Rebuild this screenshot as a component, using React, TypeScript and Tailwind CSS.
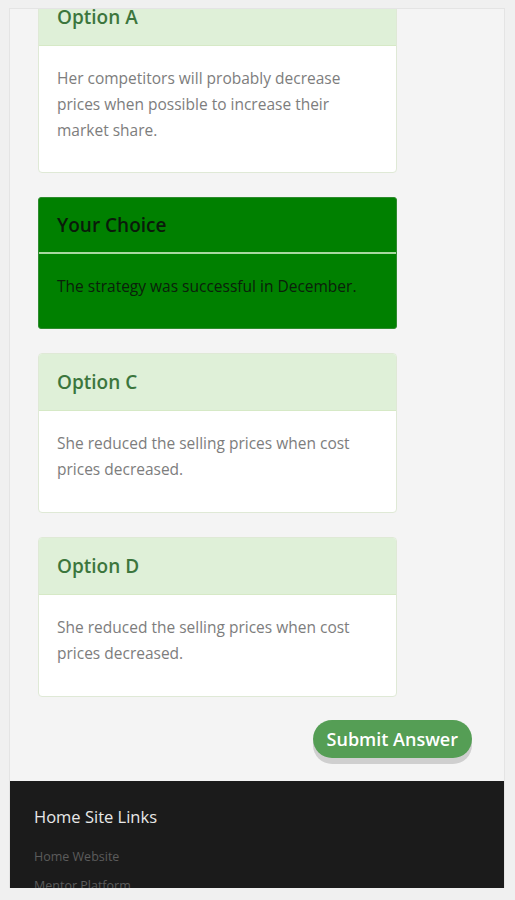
import React from 'react';

interface OptionCardProps {
  title: string;
  text: string;
  chosen?: boolean;
  first?: boolean;
}

const OptionCard: React.FC<OptionCardProps> = ({title, text, chosen = false, first = false}) => {
  if (chosen) {
    return (
      <div className="w-[359px] rounded-[3px] border border-[#2e8b2e] bg-[#008000]">
        <div className="flex h-[56px] items-center border-b-2 border-[#a8d8a0] px-[18px]">
          <h3 className="text-[19px] font-semibold text-[#0a1a0a]">{title}</h3>
        </div>
        <div className="px-[18px] pb-[29px] pt-[19px]">
          <p className="text-[15.5px] leading-[26px] text-[#0b200b]">{text}</p>
        </div>
      </div>
    );
  }
  return (
    <div
      className={
        first
          ? 'mt-[-21px] w-[359px] overflow-hidden rounded-[4px] border border-[#dfe9d6] bg-white'
          : 'w-[359px] overflow-hidden rounded-[4px] border border-[#dfe9d6] bg-white'
      }
    >
      <div className="flex h-[57px] items-center border-b border-[#d6e9c6] bg-[#dff0d8] px-[18px]">
        <h3 className="text-[19px] font-semibold text-[#3c763d]">{title}</h3>
      </div>
      <div className={first ? 'px-[18px] pb-[29px] pt-[19px]' : 'px-[18px] pb-[30px] pt-[19px]'}>
        <p className="text-[15.5px] leading-[26px] text-[#7d7d7d]">{text}</p>
      </div>
    </div>
  );
};

export default function App() {
  return (
    <div
      className="h-[900px] w-[515px] overflow-hidden bg-[#f0f0f0] pl-[9px] pt-[8px]"
      style={{fontFamily: '"Open Sans", "Noto Sans", sans-serif'}}
    >
      <div className="flex h-[880px] w-[496px] flex-col overflow-hidden border-x border-t border-[#e4e4e4] bg-[#f4f4f4]">
        <div className="flex flex-col gap-[24px] pl-[28px]">
          <OptionCard
            first
            title="Option A"
            text="Her competitors will probably decrease prices when possible to increase their market share."
          />
          <OptionCard chosen title="Your Choice" text="The strategy was successful in December." />
          <OptionCard title="Option C" text="She reduced the selling prices when cost prices decreased." />
          <OptionCard title="Option D" text="She reduced the selling prices when cost prices decreased." />
        </div>

        <div className="flex justify-end pr-[32px] pt-[23px]">
          <button className="h-[38px] rounded-full bg-[#559e55] px-[14px] text-[18px] font-semibold text-white shadow-[0_6px_0_#cfcfcf]">
            Submit Answer
          </button>
        </div>

        <footer className="mt-[23px] flex-1 bg-[#1b1b1b] px-[24px] pt-[24px]">
          <h4 className="text-[16.5px] text-[#e8e8e8]">Home Site Links</h4>
          <ul className="mt-[18px] flex flex-col gap-[10px] text-[12.5px] text-[#5c5c5c]">
            <li>Home Website</li>
            <li>Mentor Platform</li>
          </ul>
        </footer>
      </div>
    </div>
  );
}
